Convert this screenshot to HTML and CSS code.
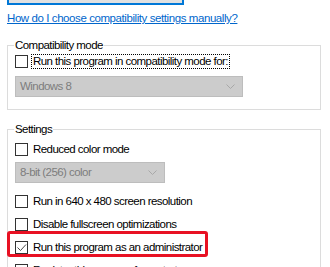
FILE: index.html
```html
<!DOCTYPE html>
<html>
<head>
<meta charset="utf-8">
<link rel="stylesheet" href="styles.css">
</head>
<body>
<div class="page">
  <div class="btn"></div>
  <a class="help" href="#">How do I choose compatibility settings manually?</a>

  <fieldset class="group group-compat">
    <legend>Compatibility mode</legend>
    <label class="row row-first"><span class="box"></span><span class="text focus">Run this program in compatibility mode for:</span></label>
    <div class="select select-wide"><span>Windows 8</span><svg class="chev" width="9" height="5" viewBox="0 0 9 5"><polyline points="0.5,0.5 4.5,4.5 8.5,0.5" fill="none" stroke="#a8a8a8" stroke-width="1"/></svg></div>
  </fieldset>

  <fieldset class="group group-settings">
    <legend>Settings</legend>
    <label class="row row-first"><span class="box"></span><span class="text">Reduced color mode</span></label>
    <div class="select select-narrow"><span>8-bit (256) color</span><svg class="chev" width="9" height="5" viewBox="0 0 9 5"><polyline points="0.5,0.5 4.5,4.5 8.5,0.5" fill="none" stroke="#a8a8a8" stroke-width="1"/></svg></div>
    <label class="row row-after-select"><span class="box"></span><span class="text">Run in 640 x 480 screen resolution</span></label>
    <label class="row"><span class="box"></span><span class="text">Disable fullscreen optimizations</span></label>
    <label class="row row-marked"><span class="box"><svg width="11" height="11" viewBox="0 0 11 11"><polyline points="1.5,5.5 4.5,8.5 10,2.5" fill="none" stroke="#4a4a4a" stroke-width="1"/></svg></span><span class="text">Run this program as an administrator</span><span class="mark"></span></label>
    <label class="row"><span class="box"></span><span class="text">Register this program for restart</span></label>
  </fieldset>
</div>
</body>
</html>
```

FILE: styles.css
```css
html, body {
  margin: 0;
  padding: 0;
  background: #ffffff;
  overflow: hidden;
}

.page {
  padding: 0 0 0 7px;
  font-family: "Liberation Sans", Arial, sans-serif;
  font-size: 11.5px;
  letter-spacing: -0.55px;
  color: #000000;
  line-height: 15px;
}

.btn {
  width: 173px;
  height: 20px;
  margin-top: -19px;
  border: 2px solid #0078d7;
  background: #e1e1e1;
}

.help {
  display: block;
  margin-top: 6px;
  color: #0066cc;
  text-decoration: underline;
  width: max-content;
  letter-spacing: -0.42px;
}

.group {
  box-sizing: border-box;
  width: 314px;
  margin: 12px 0 0 0;
  padding: 0 0 12px 7px;
  border: 1px solid #dcdcdc;
  min-width: 0;
}

.group legend {
  padding: 0 1px;
  margin-left: -1px;
  line-height: 15px;
}

.group-settings {
  margin-top: 12px;
  padding-bottom: 40px;
}

.row {
  display: flex;
  align-items: center;
  height: 15px;
  margin-top: 8px;
  position: relative;
}

.group-compat .row-first {
  margin-top: 1px;
}

.group-settings .row-first {
  margin-top: 5px;
}

.row-after-select {
  margin-top: 11px;
}

.box {
  box-sizing: border-box;
  width: 13px;
  height: 13px;
  border: 1px solid #333333;
  background: #ffffff;
  margin-right: 4px;
  flex: none;
  display: flex;
  align-items: center;
  justify-content: center;
}

.box svg {
  display: block;
}

.text {
  white-space: nowrap;
  padding: 0 1px;
  border: 1px solid transparent;
  line-height: 13px;
  margin-left: -1px;
}

.focus {
  border: 1px dotted #000000;
}

.select {
  box-sizing: border-box;
  height: 21px;
  margin-top: 7px;
  border: 1px solid #bdbdbd;
  background: #cccccc;
  color: #7d7d7d;
  display: flex;
  align-items: center;
  justify-content: space-between;
  padding: 0 7px 0 4px;
}

.select-wide {
  width: 228px;
}

.select-narrow {
  width: 150px;
  margin-top: 5px;
}

.chev {
  display: block;
}

.mark {
  position: absolute;
  left: -8px;
  top: -9px;
  width: 201px;
  height: 26px;
  box-sizing: border-box;
  border: 3px solid #e81123;
  border-radius: 3px;
}
```
